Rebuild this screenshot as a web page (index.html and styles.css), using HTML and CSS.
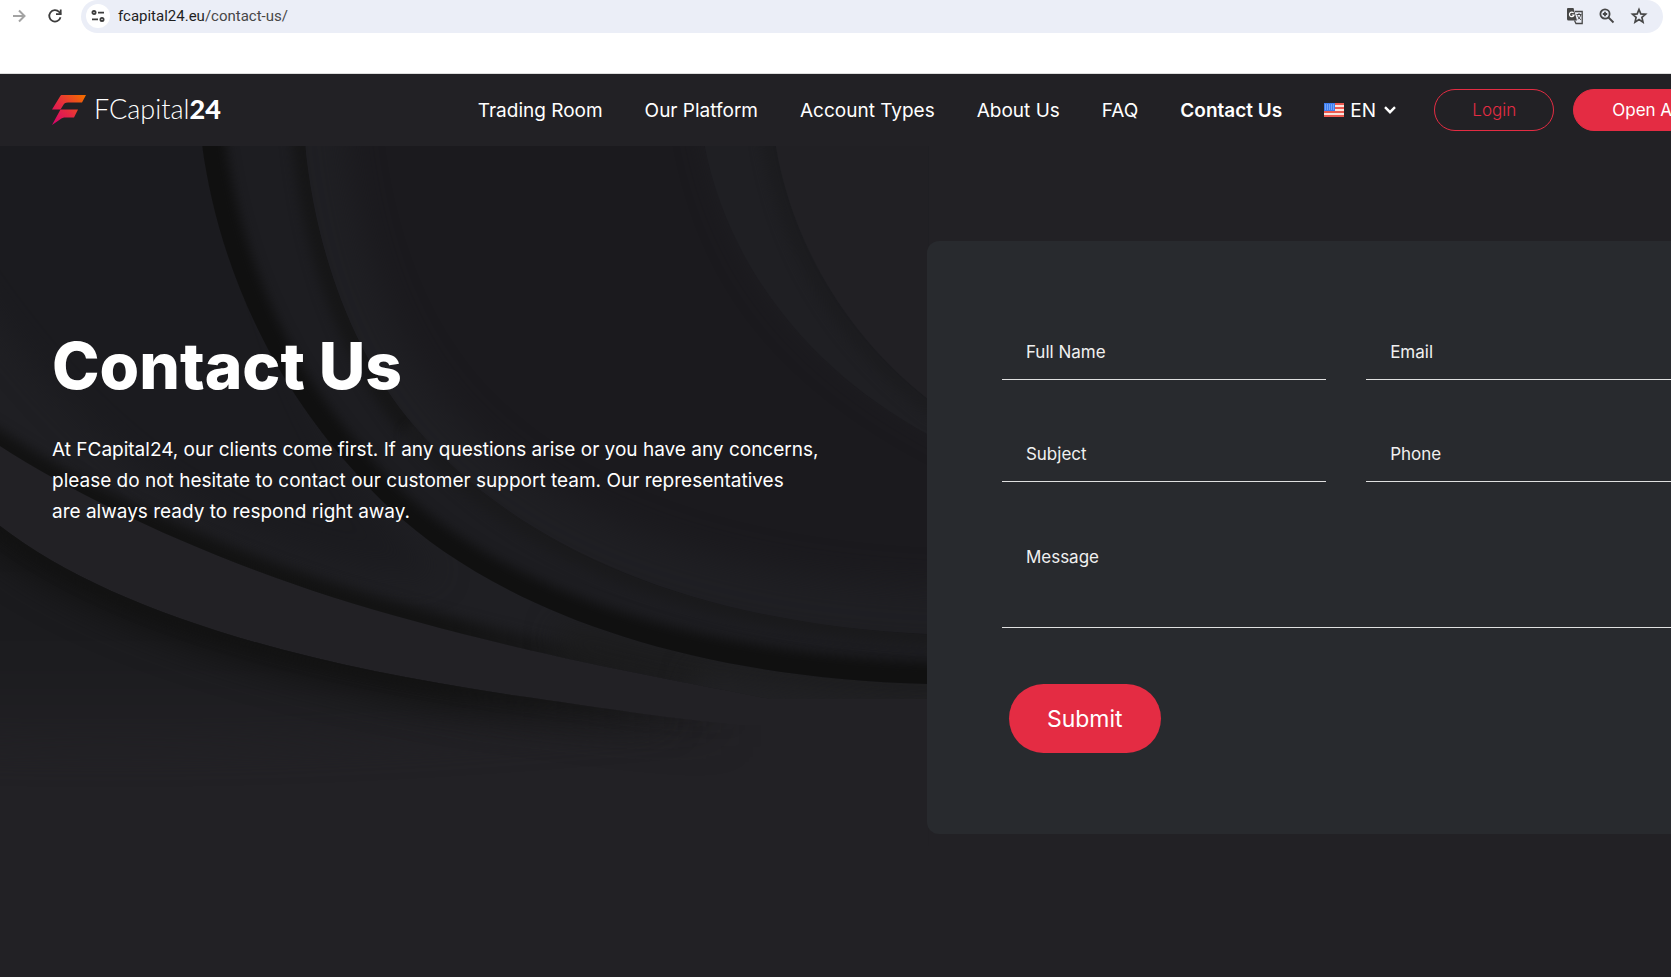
FILE: index.html
```
<!DOCTYPE html>
<html lang="en">
<head>
  <meta charset="UTF-8">
  <meta name="viewport" content="width=device-width, initial-scale=1.0">
  <title>Contact Us - FCapital24</title>
  <link rel="stylesheet" href="styles.css">
</head>
<body>
  <div class="browser-bar">
    <button class="bar-btn" type="button" aria-label="Forward">
      <svg width="18" height="18" viewBox="0 0 18 18" fill="none" stroke="#a3a3a3" stroke-width="2"><path d="M3 9h11M9 3.500l5.500 5.500L9 14.500"/></svg>
    </button>
    <button class="bar-btn" type="button" aria-label="Reload">
      <svg width="18" height="18" viewBox="0 0 18 18" fill="none" stroke="#3c3c3c" stroke-width="1.800"><path d="M14.500 10.200A5.700 5.700 0 1 1 13.200 5L14.800 6.800"/><path d="M14.700 2.500V7.200H10"/></svg>
    </button>
    <div class="address">
      <button class="site-info" type="button" aria-label="Site information">
        <svg width="14" height="12" viewBox="0 0 14 12" fill="none" stroke="#3c3c3c" stroke-width="1.800"><circle cx="3" cy="2.600" r="1.600"/><path d="M7 2.600h6M1 9.400h6"/><circle cx="11" cy="9.400" r="1.600"/></svg>
      </button>
      <span class="url">fcapital24.eu<span class="path">/contact-us/</span></span>
      <button class="bar-btn" type="button" aria-label="Translate">
        <svg width="18" height="18" viewBox="0 0 18 18"><path d="M2 1h5.500L11 13.500H2.500A1.500 1.500 0 0 1 1 12V2a1 1 0 0 1 1-1z" fill="#474747"/><path d="M9 4.500h7.200v12H10l-1.500-3" fill="none" stroke="#474747" stroke-width="1.300"/><path d="M7.600 6A2.300 2.300 0 1 0 8 8H5.800" fill="none" stroke="#fff" stroke-width="1.200"/><path d="M10.500 7.500h5M13 6v1.500M14.800 8c-.6 2-1.800 3.500-3 4.300M11.500 8.500c.5 1.600 2 3.400 3.500 4.200" fill="none" stroke="#474747"/></svg>
      </button>
      <button class="bar-btn" type="button" aria-label="Zoom">
        <svg width="18" height="18" viewBox="0 0 18 18" fill="none" stroke="#474747" stroke-width="1.800"><circle cx="7" cy="7" r="4.600"/><path d="M10.500 10.500l5 5M7 4.800v4.400M4.800 7h4.400"/></svg>
      </button>
      <button class="bar-btn" type="button" aria-label="Bookmark">
        <svg width="18" height="18" viewBox="0 0 18 18" fill="none" stroke="#474747" stroke-width="1.700"><path d="M9 2.500l1.800 4.400 4.700.4-3.600 3.100 1.100 4.700L9 12.600l-4 2.500 1.100-4.700-3.600-3.100 4.700-.4z"/></svg>
      </button>
    </div>
  </div>

  <div class="site">
    <header class="header">
      <a href="#" class="logo">
        <svg width="34" height="30" viewBox="0 0 34 30">
          <defs>
            <linearGradient id="flame" x1="0" y1="30" x2="30" y2="0" gradientUnits="userSpaceOnUse">
              <stop offset="0" stop-color="#d6006f"/>
              <stop offset=".5" stop-color="#e62b40"/>
              <stop offset="1" stop-color="#f26a00"/>
            </linearGradient>
          </defs>
          <path d="M10 0h24l-4 7.500H16c-3 0-4 1-5 3l-2.500 4H0L8 1.500C8.500 .5 9 0 10 0z" fill="url(#flame)"/>
          <path d="M8.500 14.500H26l-4 8h-8c-3 0-4 .5-6 2L0 30z" fill="url(#flame)"/>
        </svg>
        <span class="logo-text">FCapital<b>24</b></span>
      </a>
      <nav class="nav">
        <a href="#">Trading Room</a>
        <a href="#">Our Platform</a>
        <a href="#">Account Types</a>
        <a href="#">About Us</a>
        <a href="#">FAQ</a>
        <a href="#" class="active">Contact Us</a>
        <div class="lang">
          <svg width="20" height="14" viewBox="0 0 20 14">
            <path d="M0 0h20v14H0z" fill="#fbe3dc"/>
            <path d="M0 1h20M0 5h20M0 9h20M0 13h20" stroke="#ee5a50" stroke-width="2"/>
            <path d="M0 0h11v8H0z" fill="#3d7df0"/>
            <path d="M1 2h9M1 4h9M1 6h9" stroke="#a9cbff" stroke-dasharray="1 1"/>
          </svg>
          <select aria-label="Language">
            <option>EN</option>
          </select>
          <svg class="chevron" width="12" height="8" viewBox="0 0 12 8" fill="none" stroke="#fff" stroke-width="2.400"><path d="M1 1.200l5 5 5-5"/></svg>
        </div>
      </nav>
      <a href="#" class="btn btn-outline">Login</a>
      <a href="#" class="btn">Open Account</a>
    </header>

    <main class="hero">
      <svg class="waves" viewBox="0 0 928 700" preserveAspectRatio="none" color-interpolation-filters="sRGB" aria-hidden="true">
        <defs>
          <filter id="soft" x="-100" y="-100" width="1200" height="900" filterUnits="userSpaceOnUse"><feGaussianBlur stdDeviation="16"/></filter>
          <filter id="fine" x="-100" y="-100" width="1200" height="900" filterUnits="userSpaceOnUse"><feGaussianBlur stdDeviation="6"/></filter>
          <linearGradient id="floor" x1="0" y1="380" x2="0" y2="610" gradientUnits="userSpaceOnUse">
            <stop offset="0" stop-color="#1a1a1d"/>
            <stop offset=".6" stop-color="#1c1c1f"/>
            <stop offset="1" stop-color="#222125"/>
          </linearGradient>
          <linearGradient id="fade" x1="0" y1="0" x2="740" y2="0" gradientUnits="userSpaceOnUse">
            <stop offset="0" stop-color="#121212"/>
            <stop offset=".6" stop-color="#131313"/>
            <stop offset="1" stop-color="#161616" stop-opacity="0"/>
          </linearGradient>
          <clipPath id="clipF"><path d="M0 380C110 465 300 520 533 552C600 562 680 574 740 579H928V700H0z"/></clipPath>
          <clipPath id="clipE"><path d="M0 0V300C100 365 260 435 414 475C560 515 680 535 770 553H928V0z"/></clipPath>
          <clipPath id="clipA"><path d="M202 0C215 95 255 215 352 323C450 440 640 530 928 538V0z"/></clipPath>
          <clipPath id="clipB"><path d="M305 0C315 100 350 205 414 280C520 405 700 478 928 488V0z"/></clipPath>
          <clipPath id="clipD"><path d="M704 0C725 110 800 220 928 289V0z"/></clipPath>
          <clipPath id="clipC"><path d="M775 0C790 90 840 185 928 254V0z"/></clipPath>
        </defs>
        <path d="M0 0H928V700H0z" fill="#222125"/>
        <!-- lower shadow -->
        <g clip-path="url(#clipF)">
          <path d="M-60 340H533C600 560 640 570 680 574C500 590 250 610 -60 600z" fill="url(#floor)" filter="url(#soft)"/>
          <path d="M-40 350L0 380C110 465 300 520 533 552C600 562 680 574 740 579" fill="none" stroke="url(#fade)" stroke-width="46" filter="url(#soft)"/>
          <path d="M-40 350L0 380C110 465 300 520 533 552C600 562 680 574 740 579" fill="none" stroke="url(#fade)" stroke-width="12" filter="url(#fine)"/>
        </g>
        <!-- left sheet -->
        <g clip-path="url(#clipE)">
          <path d="M0 0H928V560H0z" fill="#1f1f23"/>
          <path d="M-40 -40H240C260 200 350 350 440 430C250 420 100 330 -40 120z" fill="#1b1b1f" filter="url(#soft)"/>
          <path d="M-40 275L0 300C100 365 260 435 414 475C560 515 680 535 770 553" fill="none" stroke="url(#fade)" stroke-width="28" filter="url(#fine)"/>
          <path d="M560 490C680 530 800 540 960 545" fill="none" stroke="#1c1c1c" stroke-width="30" filter="url(#soft)"/>
          <path d="M680 590H960V552C860 552 760 535 700 520z" fill="#212124" filter="url(#soft)"/>
        </g>
        <!-- main sweep -->
        <g clip-path="url(#clipA)">
          <path d="M0 0H928V560H0z" fill="#1d1d21"/>
          <path d="M202 -20C215 95 255 215 352 323C450 440 640 530 960 538" fill="none" stroke="#101010" stroke-width="42" filter="url(#fine)"/>
          <path d="M305 -20C315 100 350 205 414 280" fill="none" stroke="#161617" stroke-width="30" filter="url(#fine)"/>
          <path d="M414 280C520 405 700 478 960 488" fill="none" stroke="#1a1a1c" stroke-width="26" filter="url(#fine)"/>
        </g>
        <g clip-path="url(#clipB)">
          <path d="M305 0H928V488H305z" fill="#1b1a1e"/>
          <path d="M310 -40C320 100 360 205 424 280C530 400 710 470 980 474" fill="none" stroke="#1f1f23" stroke-width="64" filter="url(#soft)"/>
        </g>
        <!-- right folds -->
        <path d="M704 -40C725 110 800 220 1000 310V-40z" fill="#202024" filter="url(#soft)"/>
        <g clip-path="url(#clipD)">
          <path d="M704 0H928V289H704z" fill="#1f1f23"/>
          <path d="M770 -20C785 90 835 185 940 264" fill="none" stroke="#1c1c1f" stroke-width="24" filter="url(#fine)"/>
        </g>
        <path d="M704 0H928V289H704z" fill="#212024" clip-path="url(#clipC)"/>
      </svg>

      <section class="intro">
        <h1>Contact Us</h1>
        <p>At FCapital24, our clients come first. If any questions arise or you have any concerns, please do not hesitate to contact our customer support team. Our representatives<br>are always ready to respond right away.</p>
      </section>

      <form class="card">
        <input type="text" placeholder="Full Name" aria-label="Full Name">
        <input type="email" placeholder="Email" aria-label="Email">
        <input type="text" placeholder="Subject" aria-label="Subject">
        <input type="tel" placeholder="Phone" aria-label="Phone">
        <textarea placeholder="Message" aria-label="Message"></textarea>
        <button class="submit" type="button">Submit</button>
      </form>
    </main>
  </div>
</body>
</html>
```
FILE: styles.css
```
* { box-sizing: border-box; }
body { font-family: Inter, Arial, sans-serif; margin: 0; background: #222125; color: #fff; min-height: 100vh; overflow: hidden; display: flex; flex-direction: column; }
a { color: inherit; text-decoration: none; }
button { font-family: inherit; border: 0; cursor: pointer; }

/* browser bar */
.browser-bar { display: flex; align-items: flex-start; background: #fff; height: 74px; padding: 0 8px 0 1px; border-bottom: 1px solid #ddd; }
.bar-btn { background: none; display: flex; align-items: center; justify-content: center; width: 32px; height: 32px; padding: 0; }
.browser-bar > .bar-btn { margin: 0 2px; }
.browser-bar > .bar-btn + .bar-btn { margin-right: 10px; }
.address { flex: 1; display: flex; align-items: center; height: 33px; background: #ebeef7; border-radius: 17px; padding: 0 8px 1px 5px; }
.site-info { width: 24px; height: 24px; border-radius: 50%; background: #fff; display: flex; align-items: center; justify-content: center; padding: 0; }
.url { flex: 1; margin-left: 8px; font-family: Roboto, sans-serif; font-size: 15px; color: #1f1f1f; }
.url .path { color: #474747; }

/* site */
.site { width: 109%; flex: 1; display: flex; flex-direction: column; }
.header { display: flex; align-items: center; height: 72px; padding: 0 55px 0 52px; }
.logo { display: flex; align-items: center; gap: 8px; }
.logo-text { font-family: Lato, sans-serif; font-size: 27px; font-weight: 300; line-height: 32px; padding-bottom: 2px; }
.logo-text b { font-weight: 900; }
.nav { display: flex; align-items: center; gap: 42px; margin-left: auto; margin-right: 38px; font-size: 19px; white-space: nowrap; }
.nav .active { font-weight: 600; }
.lang { display: flex; align-items: center; gap: 6px; }
.lang select { appearance: none; background: none; border: 0; padding: 0; color: #fff; font-family: inherit; font-size: 19px; }
.chevron { margin-left: 2px; }
.btn { display: flex; align-items: center; justify-content: center; height: 42px; padding: 0 38px; border: 1px solid #e42c43; border-radius: 21px; background: #e42c43; font-size: 17px; white-space: nowrap; }
.btn-outline { background: none; color: #e42c43; font-weight: 300; margin-right: 19px; width: 120px; }

.hero { flex: 1; position: relative; display: grid; grid-template-columns: 24fr 23fr; align-items: start; padding: 95px 56px 144px 52px; }
.waves { position: absolute; left: 0; top: 0; width: 51%; height: 700px; }
.intro { position: relative; padding: 85px 96px 0 0; }
h1 { font-size: 64px; font-weight: 800; line-height: 80px; margin: 0 0 28px; }
.intro p { font-size: 19px; line-height: 31px; margin: 0; }

.card { position: relative; display: grid; grid-template-columns: 1fr 1fr; gap: 48px 40px; background: #282a2e; border-radius: 12px; padding: 85px 75px 81px; }
.card input, .card textarea { width: 100%; height: 54px; background: none; border: 0; border-bottom: 1px solid #e0e0e0; border-radius: 0; padding: 0 24px 1px; color: #fff; font-family: inherit; font-size: 17px; outline: 0; }
.card textarea { grid-column: 1 / -1; height: 98px; padding-top: 17px; resize: none; }
.card ::placeholder { color: #f0f0f0; opacity: 1; }
.submit { justify-self: start; margin: 8px 0 0 7px; padding: 0 38px; height: 69px; border-radius: 35px; background: #e42c43; color: #fff; font-size: 23px; }
```
